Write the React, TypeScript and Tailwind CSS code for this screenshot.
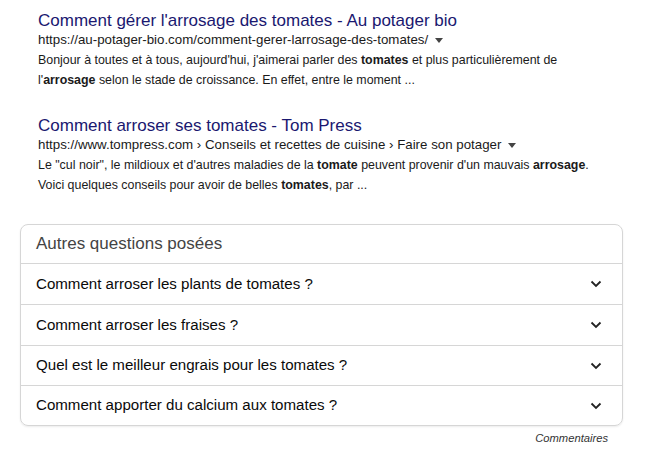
import React from "react";

const Caret = () => (
  <svg width="8" height="5" viewBox="0 0 8 5" className="ml-[7px] inline-block">
    <path d="M0 0 L8 0 L4 5 Z" fill="#444" />
  </svg>
);

const Chevron = () => (
  <svg width="12" height="8" viewBox="0 0 12 8">
    <path d="M1.5 1.5 L6 6 L10.5 1.5" fill="none" stroke="#222" strokeWidth="1.8" />
  </svg>
);

const questions = [
  { q: "Comment arroser les plants de tomates ?", h: "h-[41px] border-b" },
  { q: "Comment arroser les fraises ?", h: "h-[41px] border-b" },
  { q: "Quel est le meilleur engrais pour les tomates ?", h: "h-[40px] border-b" },
  { q: "Comment apporter du calcium aux tomates ?", h: "h-[39px]" },
];

export default function App() {
  return (
    <div
      className="w-[650px] h-[465px] bg-white overflow-hidden"
      style={{ fontFamily: '"Liberation Sans", Arial, sans-serif' }}
    >
      <div className="pl-[38px] pt-[10px]">
        <div className="text-[17px] leading-[21px] text-[#1a1870]">
          Comment gérer l'arrosage des tomates - Au potager bio
        </div>
        <div className="text-[13.3px] leading-[18px] text-[#1a1a1a] flex items-center">
          <span>https://au-potager-bio.com/comment-gerer-larrosage-des-tomates/</span>
          <Caret />
        </div>
        <div className="mt-[1px] text-[12.4px] leading-[20px] text-[#1a1a1a]">
          Bonjour à toutes et à tous, aujourd'hui, j'aimerai parler des <b>tomates</b> et plus particulièrement de
          <br />
          l'<b>arrosage</b> selon le stade de croissance. En effet, entre le moment ...
        </div>

        <div className="mt-[25px] text-[17px] leading-[21px] text-[#1a1870]">
          Comment arroser ses tomates - Tom Press
        </div>
        <div className="text-[13.3px] leading-[18px] text-[#1a1a1a] flex items-center">
          <span>https://www.tompress.com › Conseils et recettes de cuisine › Faire son potager</span>
          <Caret />
        </div>
        <div className="mt-[1px] text-[12.4px] leading-[20px] text-[#1a1a1a]">
          Le "cul noir", le mildioux et d'autres maladies de la <b>tomate</b> peuvent provenir d'un mauvais <b>arrosage</b>.
          <br />
          Voici quelques conseils pour avoir de belles <b>tomates</b>, par ...
        </div>
      </div>

      <div className="ml-[20px] mt-[29px] w-[603px] border border-[#d6d6d6] rounded-[8px] shadow-[0_1px_2px_rgba(0,0,0,0.08)]">
        <div className="h-[39px] border-b border-[#d6d6d6] pl-[15px] flex items-center text-[17px] text-[#444]">
          Autres questions posées
        </div>
        {questions.map(({ q, h }) => (
          <div
            key={q}
            className={`${h} border-[#d6d6d6] pl-[15px] pr-[20px] flex items-center justify-between text-[15.1px] text-[#0a0a0a]`}
          >
            <span>{q}</span>
            <Chevron />
          </div>
        ))}
      </div>
      <div className="w-[608px] mt-[4px] text-right text-[11.2px] italic text-[#333]">Commentaires</div>
    </div>
  );
}
